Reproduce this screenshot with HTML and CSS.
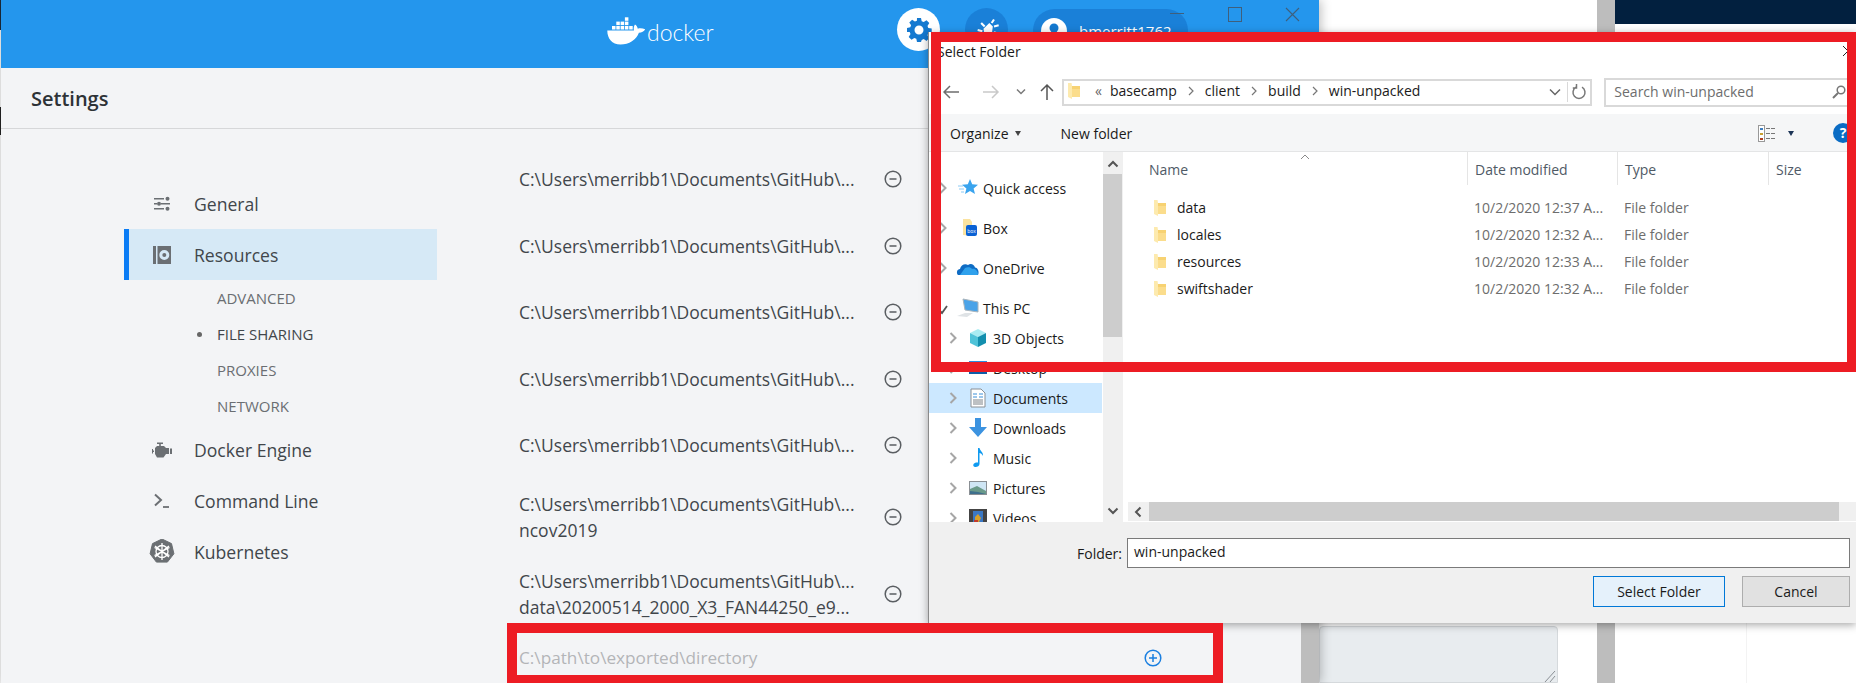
FILE: index.html
```html
<!DOCTYPE html>
<html lang="en">
<head>
  <meta charset="UTF-8">
  <title>Docker Settings - Select Folder</title>
  <link rel="stylesheet" href="styles.css">
</head>
<body>
  <svg class="defs" width="0" height="0">
    <symbol id="minus" viewBox="0 0 18 18"><circle cx="9" cy="9" r="7.8" fill="none" stroke="#5a5e62" stroke-width="1.5"/><path d="M5.5 9h7" stroke="#5a5e62" stroke-width="1.5"/></symbol>
    <symbol id="folder" viewBox="0 0 12 16"><path d="M4 3h8v11H4z" fill="#f7d272"/><path d="M0 0h3.500l.5 3v13l-4-2z" fill="#fdeaae"/><path d="M4 6h8v8H4z" fill="#fbdd8c"/></symbol>
    <symbol id="chev" viewBox="0 0 10 14"><path d="M2.500 2l5 5-5 5" fill="none" stroke="#a6a6a6" stroke-width="2"/></symbol>
  </svg>

  <div class="desktop">
    <div class="edge"></div>

    <div class="app">
      <header class="app-head">
        <div class="logo">
          <svg class="logo-mark" width="39" height="28" viewBox="0 0 39 28">
            <g fill="#fff">
              <rect x="5" y="9" width="3.500" height="3.500"/><rect x="9.300" y="9" width="3.500" height="3.500"/><rect x="13.600" y="9" width="3.500" height="3.500"/><rect x="17.900" y="9" width="3.500" height="3.500"/><rect x="22.200" y="9" width="3.500" height="3.500"/>
              <rect x="13.600" y="4.600" width="3.500" height="3.500"/><rect x="17.900" y="4.600" width="3.500" height="3.500"/><rect x="9.300" y="4.600" width="3.500" height="3.500"/>
              <rect x="17.900" y=".3" width="3.500" height="3.500"/>
              <path d="M.3 13.500h26.700c-.6-2-.2-4.600 1-6 1.500 1 2.500 2.600 2.800 4.200 1.900-.6 4.800-.5 7.400.6-1.200 2.400-3.500 3.400-6.300 3.500C29.500 23 22 27.500 13.500 27.500 5 27.500.3 21.500.3 13.500z"/>
            </g>
          </svg>
          <span class="logo-text">docker</span>
        </div>
        <div class="round round-white">
          <svg width="26" height="26" viewBox="0 0 26 26"><path fill="#1479d0" fill-rule="evenodd" d="M11 1h4l.7 3.300 2 .8 2.800-1.800 2.800 2.800-1.800 2.800.8 2 3.400.7v4l-3.400.7-.8 2 1.800 2.800-2.800 2.800-2.800-1.800-2 .8L15 25h-4l-.7-3.300-2-.8-2.800 1.800-2.800-2.800 1.800-2.800-.8-2L1 15v-4l3.300-.7.8-2-1.800-2.800 2.800-2.800 2.800 1.800 2-.8zM13 8.500a4.500 4.500 0 1 0 0 9 4.500 4.500 0 0 0 0-9z"/></svg>
        </div>
        <div class="round round-dark">
          <svg width="28" height="28" viewBox="0 0 24 24"><g fill="none" stroke="#fff" stroke-width="1.800"><path d="M5 19l3-3M4 12l4 1M7 6l3 3M18 3l-2 3M22 8l-4 1M21 15l-3-1M17 21l-2-3"/></g><path fill="#fff" d="M9 11l5-5 3 3-1 7-3 4-3-3z"/></svg>
        </div>
        <div class="user-pill">
          <span class="avatar"><svg width="26" height="26" viewBox="0 0 26 26"><circle cx="13" cy="13" r="13" fill="#fff"/><circle cx="13" cy="10" r="4.500" fill="#1479d0"/><path d="M5 22c1-5 4-7 8-7s7 2 8 7z" fill="#1479d0"/></svg></span>
          <span class="user-name">bmerritt1762</span>
        </div>
        <div class="win-controls">
          <span class="win-min"></span>
          <span class="win-max"></span>
          <svg width="15" height="15" viewBox="0 0 15 15"><path d="M1 1l13 13M14 1L1 14" stroke="#3f5f7c" stroke-width="1.100"/></svg>
        </div>
      </header>

      <div class="app-title">Settings</div>

      <div class="app-body">
        <nav class="side">
          <a class="side-item">
            <svg class="side-icon" width="20" height="16" viewBox="0 0 20 16"><g fill="#6b6f73"><path d="M2 2h10v1.500H2zM2 7h3v1.500H2zM9 7h9v1.500H9zM2 12h10v1.500H2z"/><circle cx="15.500" cy="2.700" r="2"/><circle cx="7" cy="7.700" r="2"/><circle cx="15.500" cy="12.700" r="2"/></g></svg>
            General
          </a>
          <a class="side-item side-active">
            <svg class="side-icon" width="20" height="18" viewBox="0 0 20 18"><path d="M1 0h3v18H1z" fill="#6b6f73"/><path fill="#6b6f73" fill-rule="evenodd" d="M5.500 0H19v18H5.500zM12.300 4a5 5 0 1 0 0 10 5 5 0 0 0 0-10z"/><circle cx="12.300" cy="9" r="2" fill="#6b6f73"/></svg>
            Resources
          </a>
          <a class="side-sub">ADVANCED</a>
          <a class="side-sub side-sub-on">FILE SHARING</a>
          <a class="side-sub">PROXIES</a>
          <a class="side-sub">NETWORK</a>
          <a class="side-item">
            <svg class="side-icon" width="20" height="16" viewBox="0 0 20 16"><g fill="#6b6f73"><path d="M5 .5h6V2H8.800v2H12l2 2h3v6h-3l-2.500 3.500H5L3 12V6l2-2h2.200V2H5zM0 7h1v1.500h1v1.500H1v1.500H0zM18 6.500h2v5.500h-2z"/></g></svg>
            Docker Engine
          </a>
          <a class="side-item">
            <svg class="side-icon" width="20" height="16" viewBox="0 0 20 16"><path d="M3 1.500L9 7l-6 5.500" fill="none" stroke="#6b6f73" stroke-width="2"/><path d="M11 14h6" stroke="#6b6f73" stroke-width="1.800"/></svg>
            Command Line
          </a>
          <a class="side-item">
            <svg class="side-icon side-icon-k" width="26" height="26" viewBox="0 0 26 26"><path d="M13 0l9.500 4.600 2.400 10.200-6.500 8.300-11 0L1.100 14.800 3.500 4.600z" fill="#6b6f73" stroke="#6b6f73" stroke-linejoin="round" stroke-width="1"/><g fill="none" stroke="#fff" stroke-width="1.300"><circle cx="13" cy="12.500" r="6"/><path d="M13 4v17M5.500 8.500l15 8M20.500 8.500l-15 8M6 18l14-11M20 18L6 7"/></g></svg>
            Kubernetes
          </a>
        </nav>

        <div class="shares">
          <div class="share"><span class="share-path">C:\Users\merribb1\Documents\GitHub\...</span><svg class="share-btn"><use href="#minus"/></svg></div>
          <div class="share"><span class="share-path">C:\Users\merribb1\Documents\GitHub\...</span><svg class="share-btn"><use href="#minus"/></svg></div>
          <div class="share"><span class="share-path">C:\Users\merribb1\Documents\GitHub\...</span><svg class="share-btn"><use href="#minus"/></svg></div>
          <div class="share"><span class="share-path">C:\Users\merribb1\Documents\GitHub\...</span><svg class="share-btn"><use href="#minus"/></svg></div>
          <div class="share"><span class="share-path">C:\Users\merribb1\Documents\GitHub\...</span><svg class="share-btn"><use href="#minus"/></svg></div>
          <div class="share"><span class="share-path">C:\Users\merribb1\Documents\GitHub\...<br>ncov2019</span><svg class="share-btn"><use href="#minus"/></svg></div>
          <div class="share"><span class="share-path">C:\Users\merribb1\Documents\GitHub\...<br>data\20200514_2000_X3_FAN44250_e9...</span><svg class="share-btn"><use href="#minus"/></svg></div>
          <div class="share share-new">
            <span class="share-path share-hint">C:\path\to\exported\directory</span>
            <svg class="share-btn" viewBox="0 0 18 18"><circle cx="9" cy="9" r="7.800" fill="none" stroke="#1a7fe0" stroke-width="1.500"/><path d="M5 9h8M9 5v8" stroke="#1a7fe0" stroke-width="1.500"/></svg>
          </div>
        </div>

        <div class="app-scroll"></div>
      </div>
    </div>

    <div class="back-win">
      <div class="back-area">
        <svg class="grip" width="12" height="12" viewBox="0 0 12 12"><path d="M1 12L11 1M6 12l5-6" stroke="#8a8f94"/></svg>
      </div>
    </div>
    <div class="back-bar"></div>
    <div class="far-win">
      <div class="far-top"></div>
      <div class="far-rule"></div>
    </div>

    <div class="dialog">
      <div class="dlg-title">Select Folder<span class="dlg-close">
        <svg width="12" height="12" viewBox="0 0 12 12"><path d="M1 1l10 10M11 1L1 11" stroke="#222" stroke-width="1"/></svg></span>
      </div>

      <div class="dlg-nav">
        <svg class="nav-arrow" width="18" height="14" viewBox="0 0 18 14"><path d="M1 7h15M7 1L1 7l6 6" fill="none" stroke="#6d6d6d" stroke-width="1.500"/></svg>
        <svg class="nav-arrow nav-fwd" width="18" height="14" viewBox="0 0 18 14"><path d="M1 7h15M10 1l6 6-6 6" fill="none" stroke="#c9c9c9" stroke-width="1.500"/></svg>
        <svg class="nav-arrow nav-down" width="10" height="8" viewBox="0 0 10 8"><path d="M1 1.500l4 4 4-4" fill="none" stroke="#7a7a7a" stroke-width="1.500"/></svg>
        <svg class="nav-arrow nav-up" width="14" height="18" viewBox="0 0 14 18"><path d="M7 17V2M1 8l6-6 6 6" fill="none" stroke="#555" stroke-width="1.500"/></svg>

        <div class="crumbs">
          <svg class="crumb-folder" width="12" height="16"><use href="#folder"/></svg>
          <span class="crumb-more">«</span>
          <span class="crumb">basecamp</span>
          <svg class="crumb-sep" width="6" height="10" viewBox="0 0 6 10"><path d="M1 1l4 4-4 4" fill="none" stroke="#777" stroke-width="1.200"/></svg>
          <span class="crumb">client</span>
          <svg class="crumb-sep" width="6" height="10" viewBox="0 0 6 10"><path d="M1 1l4 4-4 4" fill="none" stroke="#777" stroke-width="1.200"/></svg>
          <span class="crumb">build</span>
          <svg class="crumb-sep" width="6" height="10" viewBox="0 0 6 10"><path d="M1 1l4 4-4 4" fill="none" stroke="#777" stroke-width="1.200"/></svg>
          <span class="crumb">win-unpacked</span>
          <span class="crumb-tools">
            <svg class="crumb-drop" width="12" height="8" viewBox="0 0 12 8"><path d="M1 1.500l5 5 5-5" fill="none" stroke="#666" stroke-width="1.500"/></svg>
            <span class="crumb-refresh"><svg width="16" height="16" viewBox="0 0 16 16"><path d="M5 3.200A6 6 0 1 0 11 3.200M5.500 0v4H1.800" fill="none" stroke="#777" stroke-width="1.500"/></svg></span>
          </span>
        </div>

        <div class="search">
          <span>Search win-unpacked</span>
          <svg width="14" height="14" viewBox="0 0 14 14"><circle cx="9" cy="5" r="3.800" fill="none" stroke="#777" stroke-width="1.500"/><path d="M6 8l-5 5" stroke="#777" stroke-width="2"/></svg>
        </div>
      </div>

      <div class="dlg-tools">
        <span class="tool-org">Organize<i class="caret"></i></span>
        <span class="tool-new">New folder</span>
        <span class="tool-right">
          <svg width="18" height="18" viewBox="0 0 18 18"><rect x=".5" y=".5" width="6" height="16" fill="#fff" stroke="#999"/><path d="M2 3h3v2H2z" fill="#3f7fc0"/><path d="M2 8h3v2H2z" fill="#c8a030"/><path d="M2 13h3v2H2z" fill="#b04020"/><path d="M8 3.500h10M8 8.500h10M8 13.500h10" stroke="#777" stroke-dasharray="4 1"/></svg>
          <i class="caret caret-dark"></i>
          <span class="help">?</span>
        </span>
      </div>

      <div class="dlg-main">
        <div class="tree">
          <div class="tree-list">
            <div class="tree-row tree-top tree-gap">
              <svg class="tree-chev" width="10" height="14"><use href="#chev"/></svg>
              <svg class="tree-icon" width="24" height="20" viewBox="0 0 24 20"><path d="M14 1l2.200 5.300 5.800.4-4.400 3.700 1.400 5.600L14 13l-5 3 1.400-5.600L6 6.700l5.800-.4z" fill="#3aa4ee"/><path d="M2 8h5M3 11h5M5 14h3" stroke="#8ccaf5"/></svg>
              Quick access
            </div>
            <div class="tree-row tree-top tree-gap">
              <svg class="tree-chev" width="10" height="14"><use href="#chev"/></svg>
              <svg class="tree-icon" width="24" height="20" viewBox="0 0 24 20"><path d="M7 1h7l2 3v14l-9-1z" fill="#fbe3a0"/><rect x="10" y="7" width="11" height="11" rx="2" fill="#0a61d4"/><text x="15.500" y="14.500" class="box-mark">box</text></svg>
              Box
            </div>
            <div class="tree-row tree-top tree-gap">
              <svg class="tree-chev" width="10" height="14"><use href="#chev"/></svg>
              <svg class="tree-icon" width="24" height="20" viewBox="0 0 24 20"><path d="M2 17c-2-2-1-6 2-6 .8-4 5-6 8-4 3-2 6-.5 7 2.500 3 0 4.500 5 3 7.500z" fill="#0f6cc4"/><path d="M9 10c2-1 6-1 7 1 3-1 6 2 6 5.500l-1 .5H4z" fill="#2fa1ec"/></svg>
              OneDrive
            </div>
            <div class="tree-row tree-top">
              <svg class="tree-chev" width="10" height="14" viewBox="0 0 10 14"><path d="M1 9l3 3 5-7" fill="none" stroke="#555" stroke-width="1.800"/></svg>
              <svg class="tree-icon" width="24" height="20" viewBox="0 0 24 20"><path d="M7 1l15 3v10L9 12z" fill="#4aa3e8" stroke="#a9b4bc"/><path d="M1 18l8-3h8l-6 4z" fill="#dfe3e6"/></svg>
              This PC
            </div>
            <div class="tree-row tree-child">
              <svg class="tree-chev" width="10" height="14"><use href="#chev"/></svg>
              <svg class="tree-icon" width="24" height="20" viewBox="0 0 24 20"><path d="M12 1l8 4-8 4-8-4z" fill="#a9ecf2"/><path d="M4 5l8 4v10l-8-4z" fill="#4fc3d8"/><path d="M20 5l-8 4v10l8-4z" fill="#138fae"/></svg>
              3D Objects
            </div>
            <div class="tree-row tree-child">
              <svg class="tree-chev" width="10" height="14"><use href="#chev"/></svg>
              <svg class="tree-icon" width="24" height="20" viewBox="0 0 24 20"><rect x="3" y="3" width="18" height="12" fill="#2c8de0"/><rect x="3" y="14" width="18" height="2" fill="#0f5ea8"/></svg>
              Desktop
            </div>
            <div class="tree-row tree-child tree-on">
              <svg class="tree-chev" width="10" height="14"><use href="#chev"/></svg>
              <svg class="tree-icon" width="24" height="20" viewBox="0 0 24 20"><path d="M5 1h10l4 4v14H5z" fill="#fff" stroke="#8a8f94"/><path d="M7 6h4M7 9h4M13 6h4M13 9h4" stroke="#3a8fd8"/><path d="M7 12h10M7 14h10M7 16h10" stroke="#7d8287"/></svg>
              Documents
            </div>
            <div class="tree-row tree-child">
              <svg class="tree-chev" width="10" height="14"><use href="#chev"/></svg>
              <svg class="tree-icon" width="24" height="20" viewBox="0 0 24 20"><path d="M9 0h6v9h6l-9 10-9-10h6z" fill="#3c93e0"/></svg>
              Downloads
            </div>
            <div class="tree-row tree-child">
              <svg class="tree-chev" width="10" height="14"><use href="#chev"/></svg>
              <svg class="tree-icon" width="24" height="20" viewBox="0 0 24 20"><path d="M12 0h1.500c.5 3 4 4 3.500 8-1-2-2.500-3-3.500-3v11c0 3-5 4-6 2s1.500-4 4.500-3.500z" fill="#0f9af0"/></svg>
              Music
            </div>
            <div class="tree-row tree-child">
              <svg class="tree-chev" width="10" height="14"><use href="#chev"/></svg>
              <svg class="tree-icon" width="24" height="20" viewBox="0 0 24 20"><rect x="3.500" y="3.500" width="17" height="13" fill="#cfe6f5" stroke="#8a8f94"/><path d="M4 11l7-3 9 5v3H4z" fill="#6a9a8a"/><path d="M4 13l8 1 8 2H4z" fill="#3e6f8c"/></svg>
              Pictures
            </div>
            <div class="tree-row tree-child">
              <svg class="tree-chev" width="10" height="14"><use href="#chev"/></svg>
              <svg class="tree-icon" width="24" height="20" viewBox="0 0 24 20"><rect x="3" y="1" width="18" height="18" fill="#444"/><rect x="7" y="3" width="10" height="14" fill="#3b78c4"/><path d="M9 9l3-3 3 4-2 4H9z" fill="#d9a028"/><path d="M8 12h4v4H8z" fill="#c23b2b"/></svg>
              Videos
            </div>
          </div>
          <div class="tree-scroll">
            <svg class="scroll-arrow" width="12" height="8" viewBox="0 0 12 8"><path d="M1.500 6.500L6 2l4.500 4.500" fill="none" stroke="#555" stroke-width="2"/></svg>
            <div class="tree-thumb"></div>
            <svg class="scroll-arrow" width="12" height="8" viewBox="0 0 12 8"><path d="M1.500 1.500L6 6l4.500-4.500" fill="none" stroke="#555" stroke-width="2"/></svg>
          </div>
        </div>

        <div class="files">
          <div class="file-head">
            <svg class="sort-mark" width="10" height="6" viewBox="0 0 10 6"><path d="M1 5l4-4 4 4" fill="none" stroke="#8a8a8a"/></svg>
            <span class="col col-name">Name</span>
            <span class="col col-date">Date modified</span>
            <span class="col col-type">Type</span>
            <span class="col col-size">Size</span>
          </div>
          <div class="file-rows">
            <div class="file"><span class="col-name file-name"><svg width="12" height="16"><use href="#folder"/></svg>data</span><span class="col-date file-meta">10/2/2020 12:37 A...</span><span class="col-type file-meta">File folder</span></div>
            <div class="file"><span class="col-name file-name"><svg width="12" height="16"><use href="#folder"/></svg>locales</span><span class="col-date file-meta">10/2/2020 12:32 A...</span><span class="col-type file-meta">File folder</span></div>
            <div class="file"><span class="col-name file-name"><svg width="12" height="16"><use href="#folder"/></svg>resources</span><span class="col-date file-meta">10/2/2020 12:33 A...</span><span class="col-type file-meta">File folder</span></div>
            <div class="file"><span class="col-name file-name"><svg width="12" height="16"><use href="#folder"/></svg>swiftshader</span><span class="col-date file-meta">10/2/2020 12:32 A...</span><span class="col-type file-meta">File folder</span></div>
          </div>
          <div class="h-scroll">
            <svg width="8" height="12" viewBox="0 0 8 12"><path d="M6.500 1.500L2 6l4.500 4.500" fill="none" stroke="#555" stroke-width="2"/></svg>
            <div class="h-thumb"></div>
          </div>
        </div>
      </div>

      <div class="dlg-foot">
        <div class="foot-field">
          <label class="foot-label">Folder:</label>
          <div class="foot-input">win-unpacked</div>
        </div>
        <div class="foot-btns">
          <button class="btn btn-main">Select Folder</button>
          <button class="btn">Cancel</button>
        </div>
      </div>
    </div>

    <div class="mark mark-dialog"></div>
    <div class="mark mark-input"></div>
  </div>
</body>
</html>
```

FILE: styles.css
```css
body { margin: 0; font-family: "Open Sans", "Noto Sans", sans-serif; }
.defs { position: absolute; }
.desktop { position: relative; display: flex; width: 1856px; height: 683px; overflow: hidden; background: #fff; }
.edge { flex: 0 0 1px; background: linear-gradient(#1b2a3a 0, #1b2a3a 30px, #f0f0f0 30px, #f0f0f0 107px, #222 107px, #222 135px, #f0f0f0 135px); }

/* docker window */
.app { flex: 0 0 1318px; display: flex; flex-direction: column; height: 683px; background: #f3f4f6; box-shadow: 2px 0 10px rgba(0,0,0,.25); z-index: 1; }
.app-head { flex: 0 0 68px; display: flex; align-items: flex-start; background: #2496ed; padding-left: 606px; box-sizing: border-box; }
.logo { display: flex; align-items: flex-start; margin-top: 17px; width: 106px; }
.logo-mark { flex: none; }
.logo-text { margin: 1px 0 0 1px; font-family: Lato, sans-serif; font-size: 23px; font-weight: 300; line-height: 28px; color: #fff; }
.round { display: flex; align-items: center; justify-content: center; width: 43px; height: 43px; border-radius: 50%; margin-top: 8px; }
.round-white { margin-left: 184px; background: #fff; }
.round-dark { margin-left: 25px; background: #1a80d8; }
.user-pill { display: flex; align-items: center; width: 155px; height: 43px; margin: 9px 0 0 25px; border-radius: 22px; background: #1a80d8; box-sizing: border-box; padding-left: 8px; }
.user-name { margin-left: 12px; font-size: 15px; color: #fff; }
.avatar { display: flex; }
.win-controls { display: flex; align-items: flex-start; }
.win-min { width: 14px; height: 1px; margin: 13px 0 0 -18px; background: #3f5f7c; }
.win-max { width: 12px; height: 13px; margin: 7px 0 0 44px; border: 1px solid #3f5f7c; }
.win-controls svg { margin: 7px 0 0 43px; }
.app-title { flex: 0 0 61px; display: flex; align-items: center; box-sizing: border-box; padding-left: 30px; font-size: 20px; font-weight: 600; color: #2d3236; border-bottom: 1px solid #d6d7d9; }
.app-body { flex: 1; display: flex; min-height: 0; }

.side { flex: 0 0 395px; margin-left: 123px; padding-top: 49px; box-sizing: border-box; }
.side-item { display: flex; align-items: center; height: 51px; padding-left: 70px; font-size: 17.6px; color: #41464b; position: relative; }
.side-icon { position: absolute; left: 28px; }
.side-icon-k { left: 25px; }
.side-active { width: 313px; box-sizing: border-box; padding-left: 65px; border-left: 5px solid #0a7cf5; background: #d6e9f6; }
.side-active .side-icon { left: 23px; }
.side-sub { display: flex; align-items: center; height: 36px; margin-left: 93px; font-size: 15px; color: #6a6e72; position: relative; }
.side-sub-on { color: #41464b; }
.side-sub-on::before { content: ""; position: absolute; left: -20px; width: 5px; height: 5px; border-radius: 50%; background: #666; }

.shares { flex: 0 0 400px; padding-top: 17px; }
.share { display: flex; align-items: center; justify-content: space-between; min-height: 66.5px; box-sizing: border-box; padding: 12.5px 0; width: 391px; }
.share-path { font-size: 17.5px; line-height: 26px; color: #41464b; }
.share-hint { font-size: 17.2px; color: #b3b5b8; }
.share-btn { width: 18px; height: 18px; margin-right: 8px; }
.share-new { min-height: 50px; padding: 0; width: 643px; }
.share-new .share-btn { margin-right: 0; }
.app-scroll { margin-left: auto; flex: 0 0 18px; background: #bdbdbd; }

/* windows behind the dialog */
.back-win { flex: 0 0 278px; padding-top: 626px; box-sizing: border-box; }
.back-area { position: relative; width: 239px; height: 57px; box-sizing: border-box; background: #e8ecef; border: 1px solid #d5d9dc; border-radius: 4px 4px 0 0; }
.grip { position: absolute; right: 1px; bottom: 0; }
.back-bar { flex: 0 0 18px; background: #bdbdbd; }
.far-win { flex: 1; position: relative; }
.far-top { height: 24px; background: #02203f; }
.far-rule { width: 1px; height: 60px; margin: 599px 0 0 131px; background: #f3f3f3; }

/* folder dialog */
.dialog { position: absolute; left: 928px; top: 32px; z-index: 2; display: flex; flex-direction: column; width: 928px; height: 591px; box-sizing: border-box; background: #fff; border-left: 1px solid #8a8a8a; box-shadow: 0 2px 8px rgba(0,0,0,.35); font-size: 14px; color: #1a1a1a; }
.dlg-title { flex: 0 0 38px; display: flex; justify-content: space-between; box-sizing: border-box; padding: 10px 0 0 8px; line-height: 20px; }
.dlg-close { margin-right: 2px; }
.dlg-nav { flex: 0 0 44px; display: flex; align-items: center; }
.nav-arrow { flex: none; }
.nav-arrow:first-child { margin-left: 14px; }
.nav-fwd { margin-left: 21px; }
.nav-down { margin-left: 16px; }
.nav-up { margin-left: 14px; }
.crumbs { display: flex; align-items: center; width: 531px; height: 27px; margin-left: 8px; box-sizing: border-box; border: 2px solid #d9d9d9; padding: 0 0 3px 4px; }
.crumb-more { margin: 0 8px 0 15px; color: #666; }
.crumb-sep { margin: 0 11px; }
.crumb-tools { display: flex; align-items: center; height: 100%; margin: 0 0 -3px auto; }
.crumb-refresh { display: flex; align-items: center; justify-content: center; width: 22px; height: 100%; margin-left: 6px; border-left: 1px solid #d9d9d9; }
.search { display: flex; align-items: center; justify-content: space-between; width: 252px; height: 29px; margin-left: 12px; box-sizing: border-box; border: 2px solid #d9d9d9; padding: 0 8px 1px 8px; color: #6d6d6d; }
.dlg-tools { flex: 0 0 38px; display: flex; align-items: center; padding-top: 2px; background: #f5f6f7; border-bottom: 1px solid #e4e5e6; box-sizing: border-box; }
.tool-org { display: flex; align-items: center; margin-left: 21px; }
.caret { width: 0; height: 0; margin-left: 6px; border: 3.5px solid transparent; border-top: 5px solid #444; border-bottom: 0; }
.caret-dark { margin: 0 0 0 12px; border-top-color: #1d3557; }
.tool-new { margin-left: 40px; }
.tool-right { display: flex; align-items: center; margin-left: auto; }
.help { display: flex; align-items: center; justify-content: center; width: 20px; height: 20px; margin: 0 3px 2px 39px; border-radius: 50%; background: #0a6cc4; color: #fff; font-size: 14px; font-weight: 700; }

.dlg-main { flex: 1; display: flex; min-height: 0; }
.tree { flex: 0 0 194px; display: flex; overflow: hidden; border-right: 1px solid #f0f0f0; box-sizing: border-box; }
.tree-list { flex: 0 0 173px; padding-top: 21px; }
.tree-row { display: flex; align-items: center; height: 30px; box-sizing: border-box; }
.tree-top { padding-left: 9px; }
.tree-child { padding-left: 19px; }
.tree-gap { margin-bottom: 10px; }
.tree-on { background: #cce8ff; }
.tree-chev { flex: none; margin-right: 8px; }
.tree-icon { flex: none; margin-right: 3px; }
.box-mark { font-size: 5px; fill: #fff; text-anchor: middle; }
.tree-scroll { flex: 0 0 20px; display: flex; flex-direction: column; align-items: center; margin-left: 1px; background: #f0f0f0; }
.scroll-arrow { flex: none; margin-top: 8px; }
.tree-thumb { flex: none; width: 100%; height: 163px; margin-top: 6px; background: #cdcdcd; }
.tree-thumb + .scroll-arrow { margin-top: 170px; }

.files { flex: 1; display: flex; flex-direction: column; position: relative; min-width: 0; }
.file-head { display: flex; height: 33px; padding-left: 4px; position: relative; }
.sort-mark { position: absolute; left: 177px; top: 2px; }
.col { display: flex; align-items: center; height: 33px; box-sizing: border-box; padding-top: 1px; color: #4f5a66; }
.col-name { flex: 0 0 340px; padding-left: 22px; box-sizing: border-box; }
.col-date { flex: 0 0 150px; padding-left: 7px; box-sizing: border-box; }
.col-type { flex: 0 0 151px; padding-left: 7px; box-sizing: border-box; }
.col-size { flex: 1; padding-left: 7px; }
.col + .col { border-left: 1px solid #e5e5e5; }
.file-rows { flex: 1; padding-top: 9px; }
.file { display: flex; align-items: center; height: 27px; padding-left: 4px; }
.file-name { display: flex; align-items: center; gap: 11px; padding-left: 27px; }
.file-meta { color: #6d6d6d; }
.h-scroll { flex: 0 0 19px; display: flex; align-items: center; margin: 0 0 1px 5px; padding-left: 6px; background: #f0f0f0; }
.h-thumb { width: 690px; height: 19px; margin-left: 7px; background: #cdcdcd; }

.dlg-foot { flex: 0 0 101px; box-sizing: border-box; padding-top: 16px; background: #f0f0f0; }
.foot-field { display: flex; align-items: center; height: 30px; }
.foot-label { width: 193px; text-align: right; }
.foot-input { width: 723px; height: 30px; margin-left: 5px; box-sizing: border-box; border: 1px solid #7a7a7a; background: #fff; padding-left: 6px; line-height: 26px; }
.foot-btns { display: flex; justify-content: flex-end; gap: 17px; margin: 8px 6px 0 0; }
.btn { width: 108px; height: 31px; box-sizing: border-box; border: 1px solid #adadad; background: #e1e1e1; font: inherit; color: #1a1a1a; padding: 0; }
.btn-main { width: 132px; border: 1px solid #0078d7; background: #e5f1fb; }

/* red marks drawn over the screenshot */
.mark { position: absolute; z-index: 3; box-sizing: border-box; border: 10px solid #ed1c24; }
.mark-dialog { left: 931px; top: 32px; width: 925px; height: 340px; border-right-width: 9px; }
.mark-input { left: 507px; top: 623px; width: 716px; height: 60px; border-bottom-width: 8px; }
```
